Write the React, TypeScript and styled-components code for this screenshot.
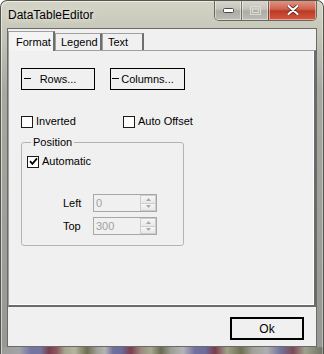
import React from "react";
import styled, { createGlobalStyle } from "styled-components";

const GlobalStyle = createGlobalStyle`
  html, body { margin: 0; padding: 0; background: #ffffff; }
  body { width: 324px; height: 354px; overflow: hidden; }
`;

const Window = styled.div`
  box-sizing: border-box;
  width: 324px;
  height: 354px;
  display: flex;
  flex-direction: column;
  padding: 0 6px 7px 6px;
  border: 1px solid #55554f;
  border-bottom: none;
  border-radius: 7px 7px 0 0;
  background:
    linear-gradient(to right, #9c9c9c 0, #a4a4a8 18px, #7474a6 30px, #74749c 40px, #7a3c4c 48px, #8a5a60 56px, #a6a68e 64px, #b4b4a0 74px, #6e6e52 86px, #a0a096 96px, #b4b4b4 104px, #70709e 112px, #6c6c9a 120px, #7c3e4e 130px, #9c8a80 140px, #a8a890 150px, #6a6a52 160px, #9e9e96 170px, #b4b4b6 182px, #7070a2 194px, #6e6e9a 204px, #7a3c4a 214px, #a0a08a 226px, #707052 240px, #a2a29a 252px, #aeaeb2 266px, #727298 280px, #7c4a56 292px, #a0a08c 304px, #6e6e62 324px) bottom / 100% 7px no-repeat,
    linear-gradient(to bottom, #d4d4c6 0, #c8c8ba 28px, #a8a8a0 90px, #979793 100%);
  box-shadow: inset 1px 1px 0 rgba(255, 255, 255, 0.55), inset -1px 0 0 rgba(255, 255, 255, 0.35);
  font-family: "Liberation Sans", Arial, sans-serif;
  font-size: 11px;
  color: #000;
  overflow: hidden;
`;

const TitleBar = styled.div`
  height: 27px;
  display: flex;
  align-items: flex-start;
  justify-content: space-between;
`;

const Title = styled.div`
  padding: 7px 0 0 1px;
  font-family: "Liberation Sans", Arial, sans-serif;
  font-size: 12px;
  line-height: 15px;
  color: #000;
  text-shadow: 0 0 6px rgba(255, 255, 255, 0.9);
`;

const Caption = styled.div`
  display: flex;
  margin-top: -1px;
  height: 20px;
  border: 1px solid rgba(70, 70, 66, 0.75);
  border-top: none;
  border-radius: 0 0 5px 5px;
  overflow: hidden;
`;

const CaptionButton = styled.div<{ $close?: boolean; $w: number }>`
  width: ${(p) => p.$w}px;
  display: flex;
  align-items: center;
  justify-content: center;
  box-shadow: inset 0 0 0 1px rgba(255, 255, 255, 0.45);
  background: ${(p) =>
    p.$close
      ? "linear-gradient(to bottom, #e29a88 0, #cf6450 45%, #bc3a24 55%, #d45840 100%)"
      : "linear-gradient(to bottom, #d8d8d0 0, #c4c4ba 45%, #acaca4 55%, #bcbcb4 100%)"};
  & + & {
    border-left: 1px solid rgba(70, 70, 66, 0.6);
  }
`;

const Client = styled.div`
  flex: 1;
  display: flex;
  flex-direction: column;
  border: 1px solid #6a6a6a;
  background: #f0f0f0;
`;

const TabStrip = styled.div`
  height: 21px;
  display: flex;
  align-items: flex-end;
  position: relative;
  z-index: 1;
`;

const Tab = styled.div<{ $active?: boolean; $w: number }>`
  box-sizing: border-box;
  width: ${(p) => p.$w}px;
  height: ${(p) => (p.$active ? 20 : 17)}px;
  margin-bottom: ${(p) => (p.$active ? -1 : 0)}px;
  padding: ${(p) => (p.$active ? "4px 0 0 7px" : "2px 0 0 5px")};
  border-left: 1px solid #a0a0a0;
  border-top: 1px solid #a0a0a0;
  border-right: 2px solid #6e6e6e;
  background: ${(p) => (p.$active ? "#f4f4f4" : "#f0f0f0")};
  font-size: 11px;
  line-height: 13px;
`;

const Panel = styled.div`
  box-sizing: border-box;
  height: 257px;
  display: flex;
  flex-direction: column;
  padding: 17px 0 0 12px;
  border-left: 1px solid #a0a0a0;
  border-top: 1px solid #a0a0a0;
  border-right: 2px solid #6b6b6b;
  border-bottom: 2px solid #6b6b6b;
  box-shadow: inset -1px -1px 0 #ffffff;
`;

const ButtonRow = styled.div`
  display: flex;
  gap: 15px;
`;

const PushButton = styled.div<{ $w: number; $offset?: number }>`
  box-sizing: border-box;
  position: relative;
  width: ${(p) => p.$w}px;
  height: 22px;
  border: 1px solid #000;
  display: flex;
  align-items: center;
  justify-content: center;
  padding-left: ${(p) => p.$offset ?? 0}px;
  line-height: 13px;
`;

const Dash = styled.span<{ $left: number }>`
  position: absolute;
  left: ${(p) => p.$left}px;
  top: 9px;
  width: 7px;
  height: 1px;
  background: #000;
`;

const CheckRow = styled.div`
  display: flex;
  margin-top: 25px;
`;

const Check = styled.div<{ $w?: number }>`
  display: flex;
  align-items: center;
  gap: 3px;
  width: ${(p) => (p.$w ? `${p.$w}px` : "auto")};
  line-height: 13px;
`;

const Box = styled.span`
  box-sizing: border-box;
  width: 12px;
  height: 12px;
  border: 1px solid #1a1a1a;
  background: #ffffff;
  display: flex;
  align-items: center;
  justify-content: center;
`;

const Group = styled.fieldset`
  box-sizing: border-box;
  width: 163px;
  height: 110px;
  margin: 8px 0 0 0;
  padding: 6px 0 0 5px;
  border: 1px solid #b4b4b4;
  border-radius: 3px;
  min-inline-size: 0;
`;

const GroupLabel = styled.legend`
  margin-left: 4px;
  padding: 0 2px;
  font-size: 11px;
  line-height: 13px;
`;

const FieldRows = styled.div`
  display: flex;
  flex-direction: column;
  gap: 5px;
  margin: 26px 0 0 36px;
`;

const FieldRow = styled.div`
  display: flex;
  align-items: center;
`;

const FieldLabel = styled.span`
  width: 30px;
  line-height: 13px;
`;

const Field = styled.div`
  box-sizing: border-box;
  width: 64px;
  height: 18px;
  display: flex;
  align-items: center;
  justify-content: space-between;
  border: 1px solid #a7a7a7;
  background: #f0f0f0;
  color: #a0a0a0;
  padding-left: 2px;
`;

const Spin = styled.div`
  display: flex;
  flex-direction: column;
  align-self: stretch;
  width: 16px;
`;

const SpinHalf = styled.div`
  flex: 1;
  display: flex;
  align-items: center;
  justify-content: center;
  border: 1px solid #cdcdcd;
  background: linear-gradient(to bottom, #f6f6f6, #e8e8e8);
  & + & {
    border-top: none;
  }
`;

const Footer = styled.div`
  flex: 1;
  display: flex;
  justify-content: flex-end;
  align-items: flex-start;
  padding: 10px 12px 0 0;
`;

const OkButton = styled.div`
  box-sizing: border-box;
  width: 74px;
  height: 23px;
  border: 2px solid #000;
  display: flex;
  align-items: center;
  justify-content: center;
  font-size: 12px;
`;

const Arrow = ({ up }: { up?: boolean }) => (
  <svg width="5" height="3" viewBox="0 0 5 3">
    <path d={up ? "M2.5 0 L5 3 L0 3 Z" : "M0 0 L5 0 L2.5 3 Z"} fill="#a8a8a8" />
  </svg>
);

const CheckBox = ({ label, checked, w }: { label: string; checked?: boolean; w?: number }) => (
  <Check $w={w}>
    <Box>
      {checked && (
        <svg width="9" height="9" viewBox="0 0 9 9">
          <path d="M1 4.2 L3.4 6.8 L8 1.4" fill="none" stroke="#000" strokeWidth="1.8" />
        </svg>
      )}
    </Box>
    <span>{label}</span>
  </Check>
);

export default function App() {
  return (
    <>
      <GlobalStyle />
      <Window>
        <TitleBar>
          <Title>DataTableEditor</Title>
          <Caption>
            <CaptionButton $w={26}>
              <svg width="11" height="5" viewBox="0 0 11 5">
                <rect x="0.5" y="0.5" width="10" height="4" rx="1" fill="#fff" stroke="#4a4a4a" />
              </svg>
            </CaptionButton>
            <CaptionButton $w={26}>
              <svg width="11" height="9" viewBox="0 0 11 9">
                <rect x="0.5" y="0.5" width="10" height="8" fill="none" stroke="#dcdcd6" />
                <rect x="2.5" y="3" width="6" height="3.5" fill="none" stroke="#dcdcd6" />
              </svg>
            </CaptionButton>
            <CaptionButton $w={47} $close>
              <svg width="12" height="10" viewBox="0 0 12 10">
                <path d="M1.5 1 L10.5 9 M10.5 1 L1.5 9" stroke="#5a2018" strokeWidth="3.6" strokeLinecap="round" />
                <path d="M1.5 1 L10.5 9 M10.5 1 L1.5 9" stroke="#ffffff" strokeWidth="2.2" strokeLinecap="round" />
              </svg>
            </CaptionButton>
          </Caption>
        </TitleBar>
        <Client>
          <TabStrip>
            <Tab $active $w={47}>Format</Tab>
            <Tab $w={47}>Legend</Tab>
            <Tab $w={42}>Text</Tab>
          </TabStrip>
          <Panel>
            <ButtonRow>
              <PushButton $w={74}>
                <Dash $left={2} />
                Rows...
              </PushButton>
              <PushButton $w={75} $offset={0}>
                <Dash $left={1} />
                Columns...
              </PushButton>
            </ButtonRow>
            <CheckRow>
              <CheckBox label="Inverted" w={102} />
              <CheckBox label="Auto Offset" />
            </CheckRow>
            <Group>
              <GroupLabel>Position</GroupLabel>
              <CheckBox label="Automatic" checked />
              <FieldRows>
                <FieldRow>
                  <FieldLabel>Left</FieldLabel>
                  <Field>
                    <span>0</span>
                    <Spin>
                      <SpinHalf><Arrow up /></SpinHalf>
                      <SpinHalf><Arrow /></SpinHalf>
                    </Spin>
                  </Field>
                </FieldRow>
                <FieldRow>
                  <FieldLabel>Top</FieldLabel>
                  <Field>
                    <span>300</span>
                    <Spin>
                      <SpinHalf><Arrow up /></SpinHalf>
                      <SpinHalf><Arrow /></SpinHalf>
                    </Spin>
                  </Field>
                </FieldRow>
              </FieldRows>
            </Group>
          </Panel>
          <Footer>
            <OkButton>Ok</OkButton>
          </Footer>
        </Client>
      </Window>
    </>
  );
}
